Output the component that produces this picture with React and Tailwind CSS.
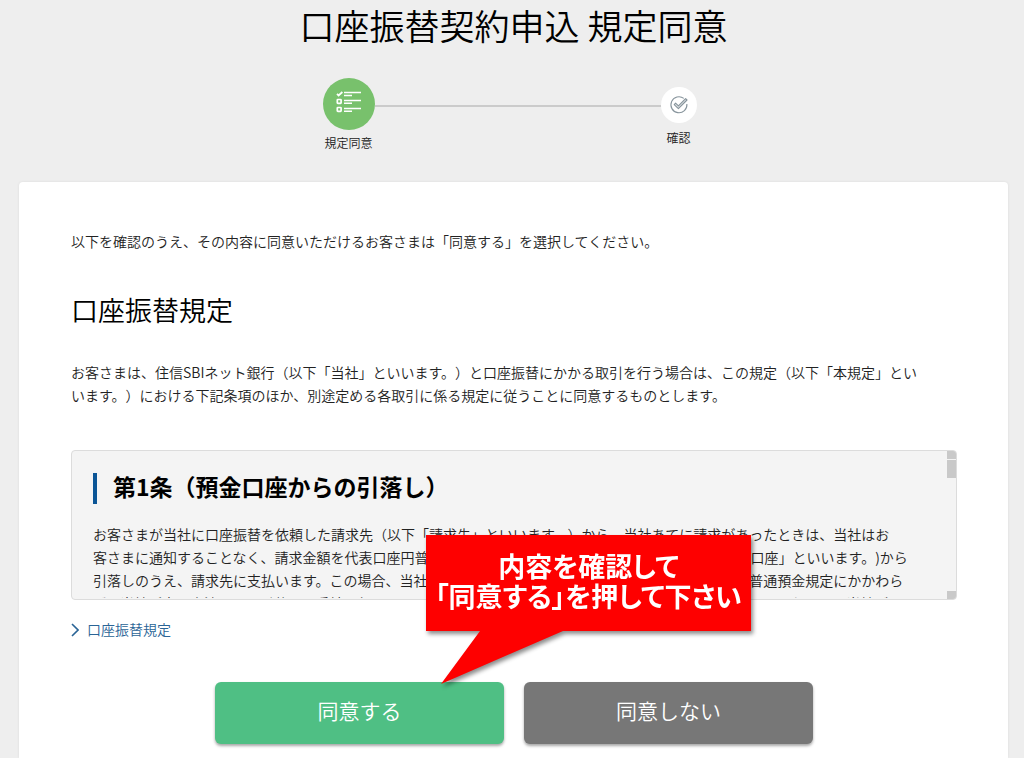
import React from "react";

function ChecklistIcon() {
  return (
    <svg viewBox="0 0 26 22" className="h-[22px] w-[26px]" fill="none" stroke="#fff" aria-hidden="true">
      <path d="M1 2.8 2.6 4.4 6.4 1" strokeWidth="1.8" />
      <rect x="1.3" y="8.5" width="3.8" height="3.8" rx="0.6" strokeWidth="1.7" />
      <rect x="1.3" y="16.5" width="3.8" height="3.8" rx="0.6" strokeWidth="1.7" />
      <path d="M8 1.5h17M8 9.5h17M8 17.5h17" strokeWidth="1.7" />
      <path d="M8 4.5h8M8 12.3h8M8 20.3h8" strokeWidth="1.6" />
    </svg>
  );
}

function ConfirmIcon() {
  return (
    <svg viewBox="0 0 20 20" className="h-5 w-5" fill="none" stroke="#87949c" strokeWidth="1.1" aria-hidden="true">
      <path d="M14.8 3.4A8 8 0 1 0 17.9 9" />
      <path d="M5.2 9.6 6.6 8.2 9.4 10.8 16.6 3.6 18 5 9.4 13.6Z" strokeLinejoin="round" fill="#dfe3e5" />
    </svg>
  );
}

function Steps() {
  return (
    <ol className="mx-auto mt-6 flex w-[382px] items-start">
      <li className="flex w-[52px] flex-col items-center" aria-current="step">
        <span className="flex h-[52px] w-[52px] items-center justify-center rounded-full bg-[#78c16c] pb-1">
          <ChecklistIcon />
        </span>
        <span className="mt-1 text-xs leading-[18px] whitespace-nowrap">規定同意</span>
      </li>
      <li className="mt-[27px] -mr-2 h-[2px] flex-1 bg-[#cbcbcb]" aria-hidden="true" />
      <li className="mt-[9px] flex w-[52px] flex-col items-center">
        <span className="flex h-9 w-9 items-center justify-center rounded-full bg-white">
          <ConfirmIcon />
        </span>
        <span className="mt-1 text-xs leading-[22px] whitespace-nowrap">確認</span>
      </li>
    </ol>
  );
}

function TermsBox() {
  return (
    <section
      className="mt-[43px] flex h-[150px] overflow-hidden rounded border border-[#dcdcdc] bg-[#f4f4f4]"
      aria-label="口座振替規定の条項"
    >
      <div className="mb-px min-w-0 flex-1 overflow-y-auto pt-[22px] pr-6 pl-[21px] [scrollbar-width:none]">
        <h3 className="border-l-4 border-[#0b5596] pb-1 pl-4 text-[23px] leading-[27px] font-bold text-black">
          第1条（預金口座からの引落し）
        </h3>
        <p className="mt-[19px] text-sm leading-[23px]">
          お客さまが当社に口座振替を依頼した請求先（以下「請求先」といいます。）から、当社あてに請求があったときは、当社はお
          <br />
          客さまに通知することなく、請求金額を代表口座円普通預金または外貨普通預金の各残高等（以下「預金口座」といいます。)から
          <br />
          引落しのうえ、請求先に支払います。この場合、当社は通帳および払戻請求書の提出を求めることなく、普通預金規定にかかわら
          <br />
          ず、当社所定の方法により引落しの手続を行うものとし、お客さまはこれをあらかじめ承諾するものとします。ただし、当社が
        </p>
      </div>
      <div className="flex w-[9px] flex-col" aria-hidden="true">
        <span className="h-2 bg-[#c9c9c9]" />
        <span className="mt-px h-[18px] bg-[#c9c9c9]" />
        <span className="mt-auto h-2 bg-[#c9c9c9]" />
      </div>
    </section>
  );
}

function Callout() {
  return (
    <div className="pointer-events-none absolute -top-[147px] left-[211px] w-[325px] drop-shadow-[2px_3px_2px_rgba(0,0,0,0.45)]">
      <p className="flex h-24 flex-col items-center justify-center bg-[#fe0000] pb-1 text-[27px] leading-[30px] font-bold whitespace-nowrap text-white [font-feature-settings:'palt']">
        <span>内容を確認して</span>
        <span>「同意する」を押して下さい</span>
      </p>
      <svg viewBox="0 0 325 54" className="-mt-px block h-[54px] w-full" aria-hidden="true">
        <path d="M54 0H137V1L15 54 54 1Z" fill="#fe0000" />
      </svg>
    </div>
  );
}

export default function App() {
  return (
    <div className="flex min-h-screen flex-col bg-[#eeeeee] pr-4 pl-[19px] font-['Noto_Sans_CJK_JP',sans-serif] font-[350] text-[#222222] [text-spacing-trim:space-all]">
      <header>
        <h1 className="pb-1 text-center text-[35px] leading-[50px] font-[350] text-black">口座振替契約申込 規定同意</h1>
        <Steps />
      </header>
      <main className="mt-[30px] flex-1 rounded-t bg-white pt-12 pr-[51px] pb-3 pl-[52px] shadow-[0_0_3px_rgba(0,0,0,0.08)]">
        <p className="text-sm leading-[23px]">
          以下を確認のうえ、その内容に同意いただけるお客さまは「同意する」を選択してください。
        </p>
        <h2 className="mt-[37px] text-[27px] leading-10 font-[350] text-black">口座振替規定</h2>
        <p className="mt-[31px] text-sm leading-[23px]">
          お客さまは、住信SBIネット銀行（以下「当社」といいます。）と口座振替にかかる取引を行う場合は、この規定（以下「本規定」とい
          <br />
          います。）における下記条項のほか、別途定める各取引に係る規定に従うことに同意するものとします。
        </p>
        <TermsBox />
        <a href="#terms" className="mt-[18px] flex w-fit items-center gap-2 text-sm leading-[23px] text-[#2a6496]">
          <svg viewBox="0 0 8 14" className="h-[14px] w-2" fill="none" stroke="currentColor" strokeWidth="1.6" aria-hidden="true">
            <path d="M1 1 7 7 1 13" />
          </svg>
          口座振替規定
        </a>
        <div className="relative mx-auto mt-[41px] flex w-[598px] gap-5">
          <button
            type="button"
            className="h-[62px] flex-1 rounded-md bg-[#4fbf84] pb-1 text-[21px] font-[350] text-white shadow-[0_2px_3px_rgba(0,0,0,0.35)]"
          >
            同意する
          </button>
          <button
            type="button"
            className="h-[62px] flex-1 rounded-md bg-[#777777] pb-1 text-[21px] font-[350] text-white shadow-[0_2px_3px_rgba(0,0,0,0.35)]"
          >
            同意しない
          </button>
          <Callout />
        </div>
      </main>
    </div>
  );
}
